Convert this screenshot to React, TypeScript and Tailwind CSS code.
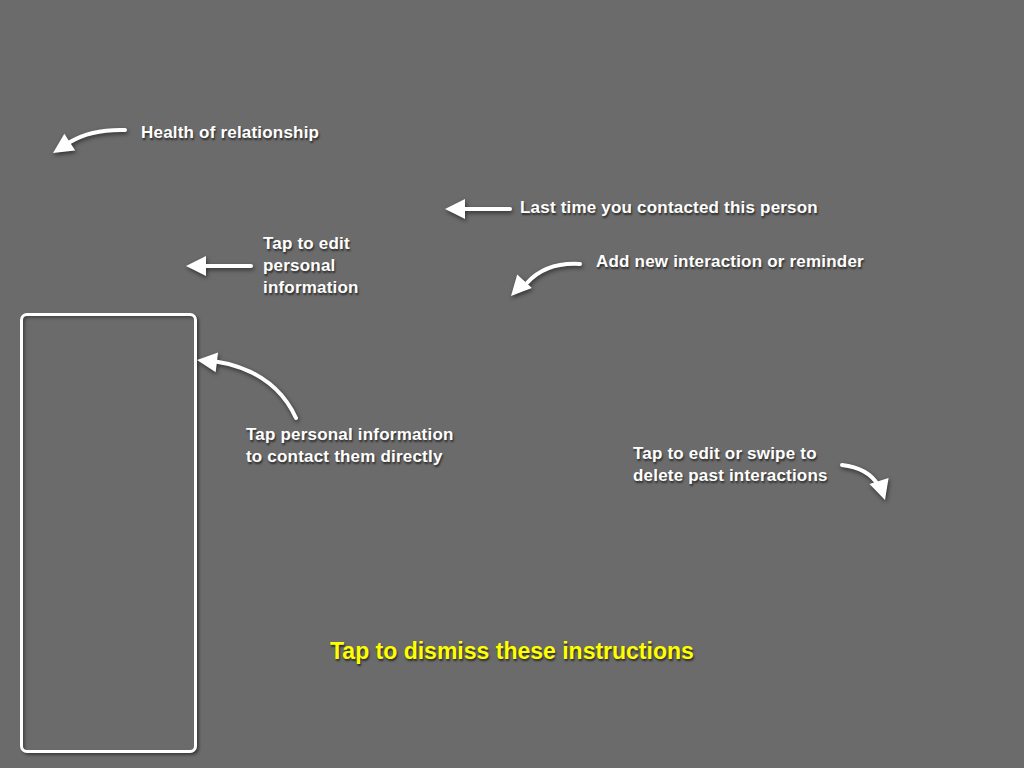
import React from 'react'

type Pt = [number, number]

// arrow head triangle from the tip and the direction it points to
function Head({ tip, dir, len = 20, w = 20 }: { tip: Pt; dir: Pt; len?: number; w?: number }) {
  const m = Math.hypot(dir[0], dir[1])
  const ux = dir[0] / m
  const uy = dir[1] / m
  const bx = tip[0] - ux * len
  const by = tip[1] - uy * len
  const px = -uy * (w / 2)
  const py = ux * (w / 2)
  const pts = `${tip[0]},${tip[1]} ${bx + px},${by + py} ${bx - px},${by - py}`
  return <polygon points={pts} fill="white" />
}

function Arrows() {
  return (
    <svg
      width="1024"
      height="768"
      className="absolute inset-0 pointer-events-none drop-shadow-[1px_2px_2px_rgba(0,0,0,0.55)]"
    >
      <g fill="none" stroke="white" strokeWidth="4" strokeLinecap="round">
        <path d="M125,130 Q92,129 70,142" />
        <path d="M510,209 L462,209" />
        <path d="M251,266 L203,266" />
        <path d="M580,264 Q546,262 527,283" />
        <path d="M296,418 Q274,370 213,361" />
        <path d="M842,465 Q868,468 878,485" />
      </g>
      <Head tip={[53, 153]} dir={[-17, 11]} />
      <Head tip={[445, 209]} dir={[-1, 0]} />
      <Head tip={[186, 266]} dir={[-1, 0]} />
      <Head tip={[511, 296]} dir={[-12, 13]} />
      <Head tip={[197, 360]} dir={[-17, -2]} />
      <Head tip={[885, 500]} dir={[5, 16]} />
    </svg>
  )
}

const note =
  'absolute text-[17px] font-bold tracking-[0.2px] leading-[22px] text-white [text-shadow:1px_2px_2px_rgba(0,0,0,0.6)] whitespace-nowrap'

export default function App() {
  return (
    <div className="relative w-[1024px] h-[768px] bg-[#6b6b6b] overflow-hidden font-['Liberation_Sans',Arial,sans-serif]">
      <div className="absolute left-[20px] top-[313px] w-[177px] h-[440px] rounded-[7px] border-[3px] border-white shadow-[2px_2px_3px_rgba(0,0,0,0.45),inset_2px_2px_3px_rgba(0,0,0,0.35)]" />

      <Arrows />

      <p className={`${note} left-[141px] top-[122px]`}>Health of relationship</p>
      <p className={`${note} left-[520px] top-[197px]`}>Last time you contacted this person</p>
      <p className={`${note} left-[263px] top-[233px]`}>
        Tap to edit
        <br />
        personal
        <br />
        information
      </p>
      <p className={`${note} left-[596px] top-[251px]`}>Add new interaction or reminder</p>
      <p className={`${note} left-[246px] top-[424px]`}>
        Tap personal information
        <br />
        to contact them directly
      </p>
      <p className={`${note} left-[633px] top-[443px]`}>
        Tap to edit or swipe to
        <br />
        delete past interactions
      </p>

      <p className="absolute left-[330px] top-[637px] text-[23px] font-bold leading-[28px] text-[#ffff00] [text-shadow:1px_2px_2px_rgba(0,0,0,0.6)] whitespace-nowrap">
        Tap to dismiss these instructions
      </p>
    </div>
  )
}
